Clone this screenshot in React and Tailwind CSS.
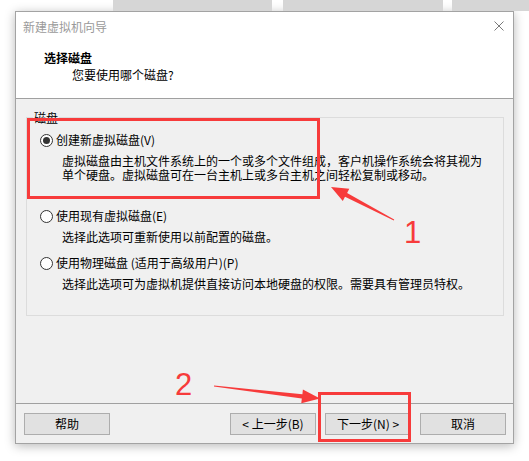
import React from "react";

const font = "font-['Noto_Sans_CJK_SC',sans-serif]";

function Radio({ checked }) {
  return (
    <span className="w-[13px] h-[13px] shrink-0 rounded-full border border-[#333333] bg-white flex items-center justify-center">
      {checked && <span className="w-[7px] h-[7px] rounded-full bg-[#333333]" />}
    </span>
  );
}

function Option({ checked, label, lines, className }) {
  return (
    <div className={className}>
      <div className="flex items-center h-[14px] pl-[13px]">
        <Radio checked={checked} />
        <span className="ml-[3px] leading-[14px] whitespace-nowrap">{label}</span>
      </div>
      <div className="mt-[7px] pl-[35px]">
        {lines.map((l) => (
          <div key={l} className="leading-[14px] whitespace-nowrap">
            {l}
          </div>
        ))}
      </div>
    </div>
  );
}

function Button({ children, className = "" }) {
  return (
    <button
      className={`h-[22px] w-[86px] border border-[#adadad] bg-[#e1e1e1] text-[12px] leading-[14px] text-black flex items-center justify-center whitespace-nowrap ${className}`}
    >
      {children}
    </button>
  );
}

export default function App() {
  return (
    <div className={`relative w-[529px] h-[461px] bg-white overflow-hidden text-[12px] text-black ${font}`}>
      {/* windows peeking out behind the dialog */}
      <div className="flex h-[11px]">
        <div className="w-[113px]" />
        <div className="w-[159px] bg-[#d6d6d6]" />
        <div className="w-[11px]" />
        <div className="w-[160px] bg-[#d6d6d6]" />
        <div className="w-[9px]" />
        <div className="flex-1 bg-[#d6d6d6]" />
      </div>

      {/* dialog */}
      <div className="ml-[15px] w-[499px] h-[433px] border border-[#a3a3a3] bg-[#f0f0f0] shadow-[0_2px_10px_rgba(0,0,0,0.28)] flex flex-col">
        {/* title + header */}
        <div className="h-[87px] bg-white border-b border-[#a0a0a0] shrink-0">
          <div className="h-[30px] flex items-center justify-between pl-[7px] pr-[9px]">
            <span className="text-[#9a9a9a] leading-[14px]">新建虚拟机向导</span>
            <svg width="10" height="10" viewBox="0 0 10 10" className="mt-[-2px]">
              <path d="M0.5 0.5 L9.5 9.5 M9.5 0.5 L0.5 9.5" stroke="#7a7a7a" strokeWidth="1" />
            </svg>
          </div>
          <div className="mt-[8px] pl-[28px] font-bold leading-[15px]">选择磁盘</div>
          <div className="mt-[2px] pl-[56px] leading-[16px]">您要使用哪个磁盘?</div>
        </div>

        {/* body */}
        <div className="flex-1">
          <div className="mt-[18px] ml-[10px] w-[478px] border border-[#dcdcdc] pb-[24px]">
            <div className="-mt-[8px] ml-[6px] w-fit px-[1px] bg-[#f0f0f0] leading-[15px]">磁盘</div>
            <Option
              className="mt-[8px]"
              checked
              label="创建新虚拟磁盘(V)"
              lines={[
                "虚拟磁盘由主机文件系统上的一个或多个文件组成，客户机操作系统会将其视为",
                "单个硬盘。虚拟磁盘可在一台主机上或多台主机之间轻松复制或移动。",
              ]}
            />
            <Option
              className="mt-[27px]"
              label="使用现有虚拟磁盘(E)"
              lines={["选择此选项可重新使用以前配置的磁盘。"]}
            />
            <Option
              className="mt-[12px]"
              label="使用物理磁盘 (适用于高级用户)(P)"
              lines={["选择此选项可为虚拟机提供直接访问本地硬盘的权限。需要具有管理员特权。"]}
            />
          </div>
        </div>

        {/* footer */}
        <div className="h-[40px] shrink-0 border-t border-[#a0a0a0] pt-[9px] pl-[8px] pr-[7px] flex justify-between items-start">
          <Button>帮助</Button>
          <div className="flex gap-[9px]">
            <Button>&lt; 上一步(B)</Button>
            <Button>下一步(N) &gt;</Button>
            <Button className="ml-[0px]">取消</Button>
          </div>
        </div>
      </div>

      {/* annotations */}
      <div className="absolute left-[27px] top-[118px] w-[293px] h-[81px] border-[3px] border-[#f73b3b]" />
      <div className="absolute left-[318px] top-[392px] w-[93px] h-[50px] border-[3px] border-[#f73b3b]" />
      <span className="absolute left-[404px] top-[217px] font-['Liberation_Sans',sans-serif] text-[31px] leading-none text-[#f73b3b]">1</span>
      <span className="absolute left-[175px] top-[369px] font-['Liberation_Sans',sans-serif] text-[31px] leading-none text-[#f73b3b]">2</span>
      <svg className="absolute inset-0 pointer-events-none" width="529" height="461" viewBox="0 0 529 461">
        <polygon
          fill="#f73b3b"
          points="331,187 349.3,188.7 347.1,192.9 394.2,219.6 393.8,220.4 345,196.8 342.8,201.1"
        />
        <polygon
          fill="#f73b3b"
          points="320,398.5 302.9,389.4 302.4,394.2 214.1,385.5 213.9,386.5 301.8,398.6 301.3,403.3"
        />
      </svg>
    </div>
  );
}
